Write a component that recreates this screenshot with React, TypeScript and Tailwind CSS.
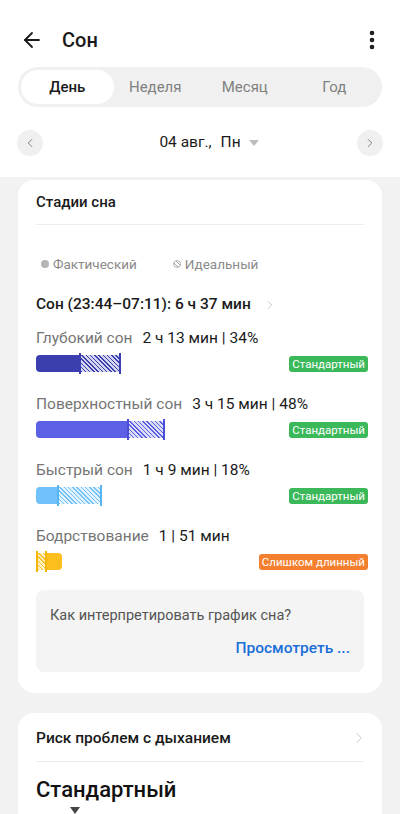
import { ArrowLeft, ChevronLeft, ChevronRight, EllipsisVertical } from 'lucide-react';

type Stage = {
  label: string;
  value: string;
  solid: string;
  hatch: string;
  line: string;
  solidW: string;
  hatchW: string;
  reverse?: boolean;
  badge: string;
  badgeColor: string;
};

const stages: Stage[] = [
  {
    label: 'Глубокий сон',
    value: '2 ч 13 мин | 34%',
    solid: 'bg-[#3a3eae]',
    hatch: 'bg-[repeating-linear-gradient(45deg,#3a3eae_0px,#3a3eae_1px,#d4d5f0_1px,#d4d5f0_3px)]',
    line: 'bg-[#3a3eae]',
    solidW: 'w-[43px]',
    hatchW: 'w-[38px]',
    badge: 'Стандартный',
    badgeColor: 'bg-[#3bb95a]',
  },
  {
    label: 'Поверхностный сон',
    value: '3 ч 15 мин | 48%',
    solid: 'bg-[#5c60e4]',
    hatch: 'bg-[repeating-linear-gradient(45deg,#5c60e4_0px,#5c60e4_1px,#dcddf8_1px,#dcddf8_3px)]',
    line: 'bg-[#4a4ed6]',
    solidW: 'w-[91px]',
    hatchW: 'w-[34px]',
    badge: 'Стандартный',
    badgeColor: 'bg-[#3bb95a]',
  },
  {
    label: 'Быстрый сон',
    value: '1 ч 9 мин | 18%',
    solid: 'bg-[#6ec1fa]',
    hatch: 'bg-[repeating-linear-gradient(45deg,#6ec1fa_0px,#6ec1fa_1px,#e2f2fe_1px,#e2f2fe_3px)]',
    line: 'bg-[#5ab4f2]',
    solidW: 'w-[21px]',
    hatchW: 'w-[41px]',
    badge: 'Стандартный',
    badgeColor: 'bg-[#3bb95a]',
  },
  {
    label: 'Бодрствование',
    value: '1 | 51 мин',
    solid: 'bg-[#fcbf1e]',
    hatch: 'bg-[repeating-linear-gradient(45deg,#fcbf1e_0px,#fcbf1e_1px,#fff0c8_1px,#fff0c8_3px)]',
    line: 'bg-[#f5b400]',
    solidW: 'w-[15px]',
    hatchW: 'w-[7px]',
    reverse: true,
    badge: 'Слишком длинный',
    badgeColor: 'bg-[#f47f2e]',
  },
];

function StageBar({ s }: { s: Stage }) {
  const marker = <div className={`w-[2px] h-[21px] -my-[2px] ${s.line}`} />;
  return (
    <div className="flex items-center h-[17px]">
      {s.reverse ? (
        <>
          {marker}
          <div className={`h-full ${s.hatchW} ${s.hatch}`} />
          {marker}
          <div className={`h-full ${s.solidW} ${s.solid} rounded-r-[4px]`} />
        </>
      ) : (
        <>
          <div className={`h-full ${s.solidW} ${s.solid} rounded-l-[4px]`} />
          {marker}
          <div className={`h-full ${s.hatchW} ${s.hatch}`} />
          {marker}
        </>
      )}
    </div>
  );
}

export default function App() {
  return (
    <div className="w-[400px] h-[814px] overflow-hidden bg-[#f2f2f2] font-['Roboto',sans-serif] text-[#1a1a1a]">
      <header className="bg-white pt-[14px] pb-[16px]">
        <div className="h-[52px] flex items-center px-[20px]">
          <ArrowLeft size={24} strokeWidth={1.8} className="text-[#1a1a1a]" />
          <h1 className="ml-[18px] text-[20px] font-medium">Сон</h1>
          <EllipsisVertical size={24} strokeWidth={2.6} className="ml-auto mr-[-4px] text-[#1a1a1a]" />
        </div>
        <div className="mx-[18px] mt-[1px] h-[40px] rounded-full bg-[#f0f0f0] grid grid-cols-4 p-[3px] text-[15px]">
          <div className="rounded-full bg-white flex items-center justify-center text-[#1a1a1a] font-medium mr-[-3px]">
            День
          </div>
          <div className="flex items-center justify-center text-[#808080]">Неделя</div>
          <div className="flex items-center justify-center text-[#808080]">Месяц</div>
          <div className="flex items-center justify-center text-[#808080]">Год</div>
        </div>
        <div className="mt-[18px] h-[36px] flex items-center px-[17px]">
          <div className="w-[26px] h-[26px] rounded-full bg-[#f0f0f0] flex items-center justify-center">
            <ChevronLeft size={14} strokeWidth={1.6} className="text-[#777]" />
          </div>
          <div className="flex-1 flex items-center justify-center text-[15.5px] text-[#1a1a1a]">
            <span className="w-[18px]" />
            <span>04 авг.,</span>
            <span className="ml-[9px]">Пн</span>
            <span className="ml-[8px] w-0 h-0 border-l-[5px] border-r-[5px] border-t-[6px] border-l-transparent border-r-transparent border-t-[#bdbdbd]" />
          </div>
          <div className="w-[26px] h-[26px] rounded-full bg-[#f0f0f0] flex items-center justify-center">
            <ChevronRight size={14} strokeWidth={1.6} className="text-[#777]" />
          </div>
        </div>
      </header>

      <main className="pt-[3px] px-[18px] flex flex-col gap-[20px]">
        <section className="bg-white rounded-[16px] px-[18px] pb-[21px]">
          <div className="pt-[12px] pb-[12px] border-b border-[#ececec] text-[15px] leading-[20px] font-medium">
            Стадии сна
          </div>

          <div className="mt-[30px] h-[18px] flex items-center text-[13.5px] text-[#8a8a8a]">
            <span className="ml-[5px] w-[8px] h-[8px] rounded-full bg-[#b5b5b5]" />
            <span className="ml-[4px]">Фактический</span>
            <span className="ml-[36px] w-[8px] h-[8px] rounded-full border border-[#b5b5b5] bg-[repeating-linear-gradient(45deg,#a0a0a0_0px,#a0a0a0_1px,#ffffff_1px,#ffffff_2.5px)]" />
            <span className="ml-[4px]">Идеальный</span>
          </div>

          <div className="mt-[22px] h-[20px] flex items-center text-[15.5px] font-medium">
            <span>Сон (23:44–07:11): 6 ч 37 мин</span>
            <ChevronRight size={14} strokeWidth={1.4} className="ml-[12px] text-[#bdbdbd]" />
          </div>

          <div className="flex flex-col gap-[23px] mt-[14px]">
            {stages.map((s) => (
              <div key={s.label}>
                <div className="h-[20px] flex items-center text-[15.5px]">
                  <span className="text-[#757575]">{s.label}</span>
                  <span className="ml-[10px] text-[#1a1a1a]">{s.value}</span>
                </div>
                <div className="mt-[6px] flex items-center justify-between">
                  <StageBar s={s} />
                  <span
                    className={`${s.badgeColor} text-white text-[11.5px] leading-[16px] px-[3px] rounded-[3px] mr-[-4px]`}
                  >
                    {s.badge}
                  </span>
                </div>
              </div>
            ))}
          </div>

          <div className="mt-[20px] h-[82px] rounded-[8px] bg-[#f4f4f4] px-[14px] pt-[16px]">
            <div className="text-[14.5px] leading-[20px] text-[#555]">Как интерпретировать график сна?</div>
            <div className="mt-[12px] text-right text-[15.5px] leading-[20px] font-medium text-[#1b6fd8]">
              Просмотреть ...
            </div>
          </div>
        </section>

        <section className="bg-white rounded-[16px] px-[18px] pb-[20px]">
          <div className="pt-[15px] pb-[13px] border-b border-[#ececec] flex items-center text-[15.5px] leading-[20px] font-medium">
            <span>Риск проблем с дыханием</span>
            <ChevronRight size={18} strokeWidth={1.2} className="ml-auto mr-[-4px] text-[#c4c4c4]" />
          </div>
          <div className="mt-[14px] text-[22px] leading-[28px] font-medium text-[#111]">Стандартный</div>
          <div className="ml-[34px] mt-[3px] w-0 h-0 border-l-[5px] border-r-[5px] border-t-[7px] border-l-transparent border-r-transparent border-t-[#444]" />
        </section>
      </main>
    </div>
  );
}
